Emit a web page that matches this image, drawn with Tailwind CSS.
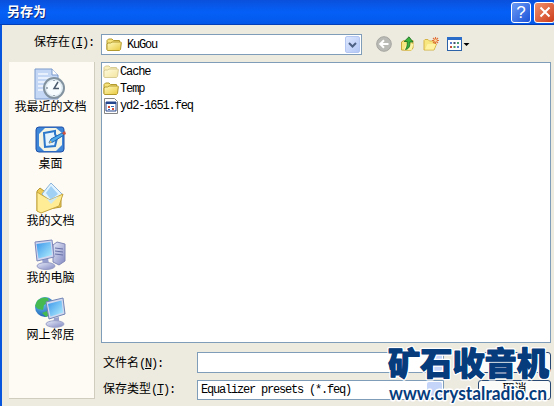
<!DOCTYPE html>
<html lang="zh-CN">
<head>
    <meta charset="UTF-8">
    <meta name="viewport" content="width=device-width, initial-scale=1.0">
    <title>另存为</title>
    <script src="https://cdn.jsdelivr.net/npm/@tailwindcss/browser@4"></script>
</head>
<body class="w-[554px] h-[406px] overflow-hidden bg-[#edeadf] text-black text-[12px] leading-[14px] font-['Liberation_Mono','Noto_Sans_CJK_SC',monospace]">

<!-- Shared icons -->
<svg class="absolute w-0 h-0">
    <defs>
        <linearGradient id="folderFill" x1="0" y1="0" x2="1" y2="1"><stop offset="0" stop-color="#fffbc0"/><stop offset="1" stop-color="#e9c93f"/></linearGradient>
        <linearGradient id="screenFill" x1="0" y1="0" x2="1" y2="1"><stop offset="0" stop-color="#3a96ea"/><stop offset="1" stop-color="#b4f0ff"/></linearGradient>
        <linearGradient id="metalFill" x1="0" y1="0" x2="1" y2="1"><stop offset="0" stop-color="#e8ecfa"/><stop offset="1" stop-color="#8087c0"/></linearGradient>
        <radialGradient id="globeFill" cx=".35" cy=".3" r=".8"><stop offset="0" stop-color="#6cc8f4"/><stop offset="1" stop-color="#1758b0"/></radialGradient>
        <symbol id="folder" viewBox="0 0 16 16">
            <path d="M1 12.5V3.5L2.5 2H6L7.5 3.5H13.5V6" fill="#f5e27a" stroke="#b39a2e"/>
            <path d="M1 13V7L2 6H4.500L6 5H14.5Q15.5 5 15.300 6L14.5 12.5L13.500 13.5H1.500Z" fill="url(#folderFill)" stroke="#b39a2e"/>
        </symbol>
    </defs>
</svg>

<div class="relative w-full h-full flex flex-col">
    <!-- Title bar -->
    <div class="h-[25px] shrink-0 flex items-center pl-[7px] bg-linear-to-b from-[#0a50dc] via-[#0560f8] to-[#0358e8] border-b border-[#0340b8]">
        <span class="text-white font-bold text-[13px] leading-[20px] pt-px [text-shadow:1px_1px_#0a2a80]">另存为</span>
        <div class="ml-auto flex gap-[3px] -mr-px">
            <button class="w-[20px] h-[21px] rounded-[3px] border border-white bg-linear-to-br from-[#6c9bf5] to-[#1c50d8] flex items-center justify-center text-white font-['Liberation_Sans',sans-serif] text-[17px] leading-none">?</button>
            <button class="w-[21px] h-[21px] rounded-[3px] border border-white bg-linear-to-br from-[#f0906c] to-[#cc3814] flex items-center justify-center">
                <svg class="w-3 h-3" viewBox="0 0 12 12"><path d="M1.5 1.5L10.5 10.5M10.5 1.5L1.5 10.5" stroke="#fff" stroke-width="2"/></svg>
            </button>
        </div>
    </div>

    <div class="flex-1 flex flex-col border-l-2 border-[#0855dd] min-h-0">
        <!-- Look-in row -->
        <div class="h-[37px] shrink-0 flex pt-[9px]">
            <div class="w-[99px] h-[20px] pl-[32px] flex items-center whitespace-nowrap -mt-px">保存在<span class="tracking-[-1.2px]">(<u>I</u>):</span></div>
            <div class="w-[261px] h-[21px] bg-white border border-[#7f9db9] flex items-center pl-[4px] pr-px">
                <svg class="w-4 h-4"><use href="#folder"/></svg>
                <span class="ml-[5px] tracking-[-1.2px]">KuGou</span>
                <div class="ml-auto w-[15px] h-[17px] rounded-xs bg-linear-to-br from-[#dce6fe] to-[#b4c8f6] border border-[#b4c6f2] flex items-center justify-center">
                    <svg class="w-[9px] h-[6px]" viewBox="0 0 9 6"><path d="M1 1L4.5 4.5L8 1" fill="none" stroke="#4d6185" stroke-width="2"/></svg>
                </div>
            </div>
            <div class="ml-[14px] flex items-center h-[20px] gap-[7.5px]">
                <svg class="w-4 h-4" viewBox="0 0 16 16"><circle cx="8" cy="8" r="7.3" fill="#b9b9b5" stroke="#a5a5a0"/><path d="M12.5 8H4.5M8 4.2L4.2 8L8 11.8" fill="none" stroke="#fff" stroke-width="2"/></svg>
                <svg class="w-4 h-4" viewBox="0 0 16 16"><path d="M1.5 14V6L4 4.5L6 5.5L13 4.5V12L11 14.5Z" fill="#f8e680" stroke="#cba93a"/><path d="M4 14L6 8H13.5L11.5 14.5Z" fill="#fcf3a4"/><path d="M5.5 13.5C9 13 10.2 10 9.8 6H13L9 .8L4.2 5.5H7.2C7.5 9 7 11.5 5.5 13.5Z" fill="#3cb43c" stroke="#17691c" stroke-width=".8"/></svg>
                <svg class="w-4 h-4" viewBox="0 0 16 16"><path d="M1 14V4.5L2 3.5H5L6.5 5H11.5V8H13.5L11 14Z" fill="#f8e680" stroke="#d6b548"/><path d="M2 13.5L4.5 8H13L10.7 13.5Z" fill="#fff3a2"/><path d="M12.5 1V8M9 4.5H16M10 2L15 7M15 2L10 7" stroke="#e07038" stroke-width="1.1"/><circle cx="12.5" cy="4.5" r="1.3" fill="#ffe0a0"/></svg>
                <svg class="w-[23px] h-4" viewBox="0 0 23 16"><rect x=".5" y="1.5" width="14" height="13" fill="#fff" stroke="#2b62a8"/><path d="M0 2.5H15" stroke="#2b6cc8" stroke-width="3"/><path d="M3 6h2v2H3zM10 10h2v2h-2z" fill="#5a7fc8"/><path d="M6.5 6h2v2h-2z" fill="#45536e"/><path d="M10 6h2v2h-2z" fill="#4aa070"/><path d="M3 10h2v2H3z" fill="#c05040"/><path d="M6.500 10h2v2h-2z" fill="#4c9a58"/><path d="M16.500 7H22.500L19.500 10Z" fill="#000"/></svg>
            </div>
        </div>

        <div class="flex pl-[7px]">
            <!-- Places bar -->
            <div class="w-[86px] h-[337px] shrink-0 bg-[#fdfbf4] border-r border-b border-[#d0cdbf] flex flex-col items-center pt-[6px] pr-[2px] text-center whitespace-nowrap">
                <div class="h-[57px] flex flex-col items-center">
                    <svg class="w-8 h-8" viewBox="0 0 32 32"><path d="M1 1H18L24 7V31H1Z" fill="#c4d8f6" stroke="#7b99cc"/><path d="M18 1V7H24" fill="#fff" stroke="#7b99cc"/><path d="M4 6H14M4 10H19M4 14H12M4 18H10M4 22H9" stroke="#f3f8ff" stroke-width="1.6"/><circle cx="20" cy="20" r="10" fill="#e1ecf2" stroke="#82929f" stroke-width="2"/><circle cx="20" cy="20" r="7.300" fill="#f7fcff"/><path d="M24 14L20 20.500H25" fill="none" stroke="#4b5b6d" stroke-width="1.500"/><path d="M12 20H14M20 27V28M20 12V13" stroke="#5a6b7d"/></svg>
                    <span class="mt-px">我最近的文档</span>
                </div>
                <div class="h-[57px] flex flex-col items-center">
                    <svg class="w-8 h-8" viewBox="0 0 32 32"><path d="M1 5Q1 2 4 2H27Q29 2 29 5V24Q29 27 26 27H4Q1 27 1 24Z" fill="#3d86d8" stroke="#1e4fa6"/><path d="M10 3H21L27 8V20L21 26H9L4 21V9Z" fill="#f4f4e4"/><path d="M9 8L20 6V9L22 13L20 21L10 22Z" fill="#e4f4ff" stroke="#2b78cb" stroke-width="2"/><path d="M14 18L16 14L27 8L29 10L18 17Z" fill="#4da9e8" stroke="#1d65b4"/><path d="M27 8L30 6L31 9L29 10Z" fill="#cd5340"/><path d="M14 18L15.500 15.500L17 17.500Z" fill="#e5c06a"/></svg>
                    <span class="mt-px">桌面</span>
                </div>
                <div class="h-[57px] flex flex-col items-center">
                    <svg class="w-8 h-8" viewBox="0 0 32 32"><path d="M3 29V9L6 6L10 9L27 13V25Z" fill="#edcb54" stroke="#b79834"/><path d="M8 12L17 1L29 13L18 26Z" fill="#e0f3ff" stroke="#8cb5dc"/><path d="M12 11L17 4L24 12L17 18Z" fill="#a1d0f5"/><path d="M3 29L3 10L16 18L29 12L25 24L7 31Z" fill="#ffec94" stroke="#c8a73e"/><path d="M12 16L16 18L25 14L17 22Z" fill="#cfe8ee"/></svg>
                    <span class="mt-px">我的文档</span>
                </div>
                <div class="h-[57px] flex flex-col items-center">
                    <svg class="w-8 h-8" viewBox="0 0 32 32"><path d="M19 6L23 3L31 5V22L25 26L19 23Z" fill="url(#metalFill)" stroke="#8188b6"/><path d="M21 9L29 10M21 12L29 13M21 15L29 16" stroke="#6871a6"/><path d="M8 20L14 19L15 25L9 26Z" fill="#969ece"/><ellipse cx="12" cy="27" rx="9" ry="3.500" fill="url(#metalFill)" stroke="#969bc5"/><path d="M1 3L18 1L20 18L3 22Z" fill="#d1d6f0" stroke="#7b86b8"/><path d="M2.500 5L16.500 3L18 16L4.500 19.500Z" fill="url(#screenFill)"/></svg>
                    <span class="mt-px">我的电脑</span>
                </div>
                <div class="h-[57px] flex flex-col items-center">
                    <svg class="w-8 h-8" viewBox="0 0 32 32"><circle cx="11" cy="11" r="10" fill="url(#globeFill)"/><path d="M3 5Q8 0 14 2L15 6L10 9L9 14L4 13L1 10ZM8 17L13 15L15 19L12 21Z" fill="#46ba51"/><path d="M20 22L25 21L25 28H19Z" fill="#9aa3ce"/><ellipse cx="21" cy="28" rx="9" ry="3.300" fill="url(#metalFill)" stroke="#9ba1c9"/><path d="M12 6L29 2L31 18L15 23Z" fill="#d0d9ef" stroke="#7184b5"/><path d="M14 8L27.500 4.500L29 16.500L16.500 20.500Z" fill="url(#screenFill)"/></svg>
                    <span class="mt-px">网上邻居</span>
                </div>
            </div>

            <div class="ml-[6px] flex flex-col">
                <!-- File list -->
                <div class="w-[450px] h-[281px] bg-white border border-[#7f9db9] pl-px tracking-[-1.13px]">
                    <div class="h-[17px] flex items-center"><svg class="w-4 h-4 opacity-50"><use href="#folder"/></svg><span class="ml-px">Cache</span></div>
                    <div class="h-[17px] flex items-center"><svg class="w-4 h-4"><use href="#folder"/></svg><span class="ml-px">Temp</span></div>
                    <div class="h-[17px] flex items-center">
                        <svg class="w-4 h-4" viewBox="0 0 16 16"><path d="M1.500 .5H11.500L14.500 3.500V15.500H1.500Z" fill="#fff" stroke="#858585"/><path d="M3 4H13V13H3Z" fill="#fff" stroke="#24468e"/><path d="M3 5H13" stroke="#24468e" stroke-width="2"/><path d="M5 8h2v2H5zM9 10h2v2H9z" fill="#ce4a36"/><path d="M8 8h3v1H8zM5 11h2v1H5z" fill="#3666b6"/></svg>
                        <span class="ml-px">yd2-1651.feq</span>
                    </div>
                </div>

                <!-- File name -->
                <div class="mt-[9px] h-[21px] flex">
                    <div class="w-[96px] pl-[2px] flex items-center whitespace-nowrap pt-[3px]">文件名<span class="tracking-[-1.2px]">(<u>N</u>):</span></div>
                    <div class="w-[247px] h-[21px] bg-white border border-[#7f9db9] flex justify-end p-px"><div class="w-[15px] rounded-xs bg-[#c5d4f9]"></div></div>
                    <div class="ml-[34px] w-[73px] h-[21px] bg-[#fbfbf9] border border-[#274873] rounded-[3px]"></div>
                </div>
                <!-- File type -->
                <div class="mt-[7px] h-[20px] flex">
                    <div class="w-[96px] pl-[2px] flex items-center whitespace-nowrap">保存类型<span class="tracking-[-1.2px]">(<u>T</u>):</span></div>
                    <div class="w-[247px] h-[20px] bg-white border border-[#7f9db9] flex items-center pl-[3px] pr-px">
                        <span class="tracking-[-1.2px] whitespace-pre">Equalizer presets (*.feq)</span>
                        <div class="ml-auto w-[15px] h-[16px] rounded-xs bg-[#c5d4f9]"></div>
                    </div>
                    <div class="ml-[34px] w-[73px] h-[20px] bg-[#fbfbf9] border border-[#274873] rounded-[3px] text-center leading-[18px]">取消</div>
                </div>
            </div>
        </div>
    </div>

    <!-- Site watermark -->
    <svg class="absolute left-[384px] top-[342px] w-[170px] h-[64px]" viewBox="0 0 170 64">
        <g fill="#063c7c" paint-order="stroke" stroke-linejoin="round">
            <text x="4" y="33" textLength="161" lengthAdjust="spacingAndGlyphs" class="font-['Noto_Sans_CJK_SC',sans-serif] font-black text-[32px]" stroke="#fff" stroke-width="3.5">矿石收音机</text>
            <text x="4" y="33" textLength="161" lengthAdjust="spacingAndGlyphs" class="font-['Noto_Sans_CJK_SC',sans-serif] font-black text-[32px]" stroke="#063c7c" stroke-width="1" aria-hidden="true">矿石收音机</text>
            <text x="5" y="58" textLength="158" lengthAdjust="spacingAndGlyphs" class="font-['Lato',sans-serif] font-bold text-[18px]" stroke="#fff" stroke-width="3">www.crystalradio.cn</text>
        </g>
    </svg>
</div>

</body>
</html>
